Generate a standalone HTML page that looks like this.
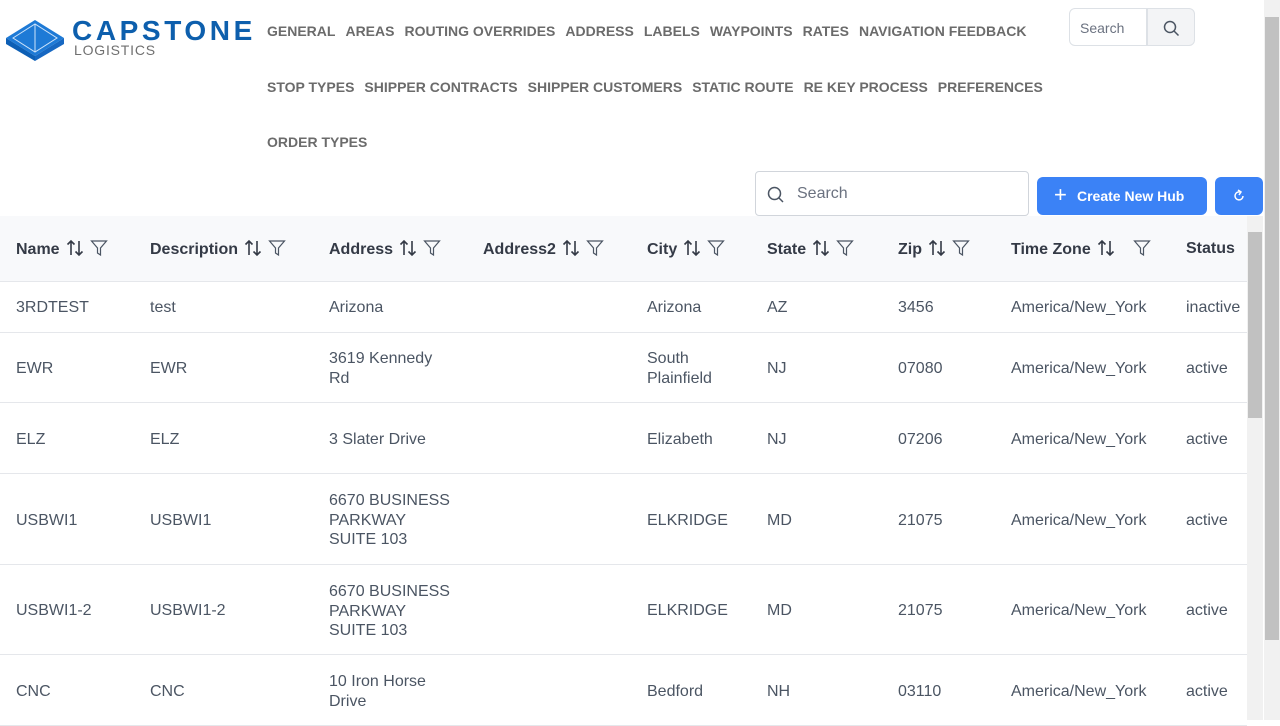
<!DOCTYPE html>
<html><head><style>
body{margin:0;width:1280px;height:720px;overflow:hidden;background:#fff;font-family:"Liberation Sans",sans-serif;position:relative}
.nav{position:absolute;font-size:14px;font-weight:bold;color:#6b6b6b;white-space:nowrap}
.nav span{margin-right:10px}
.abs{position:absolute}
.th{position:absolute;top:239px;font-size:16px;font-weight:bold;color:#343a46;white-space:nowrap;line-height:19px}
.th svg{vertical-align:-3px;margin-left:6px}
.row{position:absolute;left:0;width:1247px;border-bottom:1px solid #e5e7eb}
.c{position:absolute;font-size:16px;color:#4b5563;line-height:19.5px}
</style></head><body>
<svg class="abs" style="left:4px;top:18px" width="62" height="44" viewBox="0 0 62 44"><polygon points="2,20 31,2 60,20 31,38" fill="#1e7ad6"/><polygon points="2,20 31,38 31,43 2,26" fill="#0d5fb5"/><polygon points="60,20 31,38 31,43 60,26" fill="#1768c2"/><path d="M9,20 L31,6 L53,20 L31,34 Z M31,6 L31,34" stroke="#cfe4fa" stroke-width="1" fill="none"/></svg>
<div class="abs" style="left:72px;top:15px;font-size:28px;font-weight:bold;color:#0d5fad;letter-spacing:3.6px">CAPSTONE</div>
<div class="abs" style="left:74px;top:42px;font-size:14px;color:#707070;letter-spacing:0.8px">LOGISTICS</div>
<div class="nav" style="left:267px;top:23px"><span>GENERAL</span><span>AREAS</span><span>ROUTING OVERRIDES</span><span>ADDRESS</span><span>LABELS</span><span>WAYPOINTS</span><span>RATES</span><span>NAVIGATION FEEDBACK</span></div>
<div class="nav" style="left:267px;top:79px"><span>STOP TYPES</span><span>SHIPPER CONTRACTS</span><span>SHIPPER CUSTOMERS</span><span>STATIC ROUTE</span><span>RE KEY PROCESS</span><span>PREFERENCES</span></div>
<div class="nav" style="left:267px;top:134px"><span>ORDER TYPES</span></div>
<div class="abs" style="left:1069px;top:8px;width:78px;height:38px;border:1px solid #dde1e6;border-radius:6px 0 0 6px;box-sizing:border-box;font-size:14px;color:#6b7280;padding:11px 10px">Search</div>
<div class="abs" style="left:1147px;top:8px;width:48px;height:38px;border:1px solid #dde1e6;border-radius:0 6px 6px 0;box-sizing:border-box;background:#f3f4f6"><svg style="position:absolute;left:15px;top:11px" width="17" height="17" viewBox="0 0 17 17"><circle cx="7" cy="7" r="5.5" stroke="#4b5563" stroke-width="1.5" fill="none"/><path d="M11,11 L15.5,15.5" stroke="#4b5563" stroke-width="1.5"/></svg></div>
<div class="abs" style="left:755px;top:171px;width:274px;height:45px;border:1px solid #d1d5db;border-radius:4px;box-sizing:border-box"><svg style="position:absolute;left:11px;top:14px" width="18" height="18" viewBox="0 0 18 18"><circle cx="7.5" cy="7.5" r="6" stroke="#4b5563" stroke-width="1.5" fill="none"/><path d="M12,12 L16,16" stroke="#4b5563" stroke-width="1.5"/></svg><span style="position:absolute;left:41px;top:13px;font-size:16px;color:#6b7280">Search</span></div>
<div class="abs" style="left:1037px;top:177px;width:170px;height:38px;background:#3b82f6;border-radius:6px;color:#fff;font-size:14px;font-weight:bold;line-height:38px"><span style="position:absolute;left:17px;top:-1px;font-size:22px;font-weight:normal">+</span><span style="position:absolute;left:40px">Create New Hub</span></div>
<div class="abs" style="left:1215px;top:177px;width:48px;height:38px;background:#3b82f6;border-radius:6px"><svg style="position:absolute;left:17px;top:12px" width="14" height="14" viewBox="0 0 14 14"><path d="M11,7 A4,4 0 1 1 8,3" stroke="#fff" stroke-width="1.5" fill="none"/><path d="M6,1 L9,3 L7,6" stroke="#fff" stroke-width="1.5" fill="none"/></svg></div>
<div class="abs" style="left:0;top:216px;width:1247px;height:65px;background:#f8f9fb;border-bottom:1px solid #e5e7eb"></div>
<div id="ths"></div>
<div class="abs" style="left:1247px;top:216px;width:16px;height:504px;background:#f1f1f1"></div>
<div class="abs" style="left:1248px;top:232px;width:14px;height:186px;background:#c1c1c1"></div>
<div class="abs" style="left:1264px;top:0;width:16px;height:720px;background:#f1f1f1"></div>
<div class="abs" style="left:1265px;top:17px;width:14px;height:623px;background:#c1c1c1"></div>
<script>
var xs=[16,150,329,483,647,767,898,1011,1186];
var hs=["Name","Description","Address","Address2","City","State","Zip","Time Zone","Status"];
var sort='<svg width="18" height="18" viewBox="0 0 18 18"><path d="M5,16 V2 M1.5,5.5 L5,2 L8.5,5.5 M13,2 V16 M9.5,12.5 L13,16 L16.5,12.5" stroke="#343a46" stroke-width="1.6" fill="none"/></svg>';
var filt='<svg width="18" height="18" viewBox="0 0 18 18"><path d="M1.5,2 H16.5 L10.5,9 V16 L7.5,14 V9 Z" stroke="#4b5563" stroke-width="1.2" fill="none"/></svg>';
var h='';
hs.forEach(function(t,i){h+='<div class="th" style="left:'+xs[i]+'px">'+t+(i<8?(sort+(i==7?'<span style="margin-left:12px"></span>':'')+filt):'')+'</div>';});
var rows=[[281,52,["3RDTEST","test","Arizona","","Arizona","AZ","3456","America/New_York","inactive"]],
[332,71,["EWR","EWR","3619 Kennedy<br>Rd","","South<br>Plainfield","NJ","07080","America/New_York","active"]],
[403,71,["ELZ","ELZ","3 Slater Drive","","Elizabeth","NJ","07206","America/New_York","active"]],
[474,91,["USBWI1","USBWI1","6670 BUSINESS<br>PARKWAY<br>SUITE 103","","ELKRIDGE","MD","21075","America/New_York","active"]],
[565,90,["USBWI1-2","USBWI1-2","6670 BUSINESS<br>PARKWAY<br>SUITE 103","","ELKRIDGE","MD","21075","America/New_York","active"]],
[655,71,["CNC","CNC","10 Iron Horse<br>Drive","","Bedford","NH","03110","America/New_York","active"]]];
rows.forEach(function(r){h+='<div class="row" style="top:'+r[0]+'px;height:'+(r[1]-1)+'px">';
r[2].forEach(function(t,i){var n=t.split('<br>').length;h+='<div class="c" style="left:'+xs[i]+'px;top:'+(Math.round((r[1]-n*19.5)/2)+1)+'px">'+t+'</div>';});h+='</div>';});
document.getElementById('ths').innerHTML=h;
</script>
</body></html>
